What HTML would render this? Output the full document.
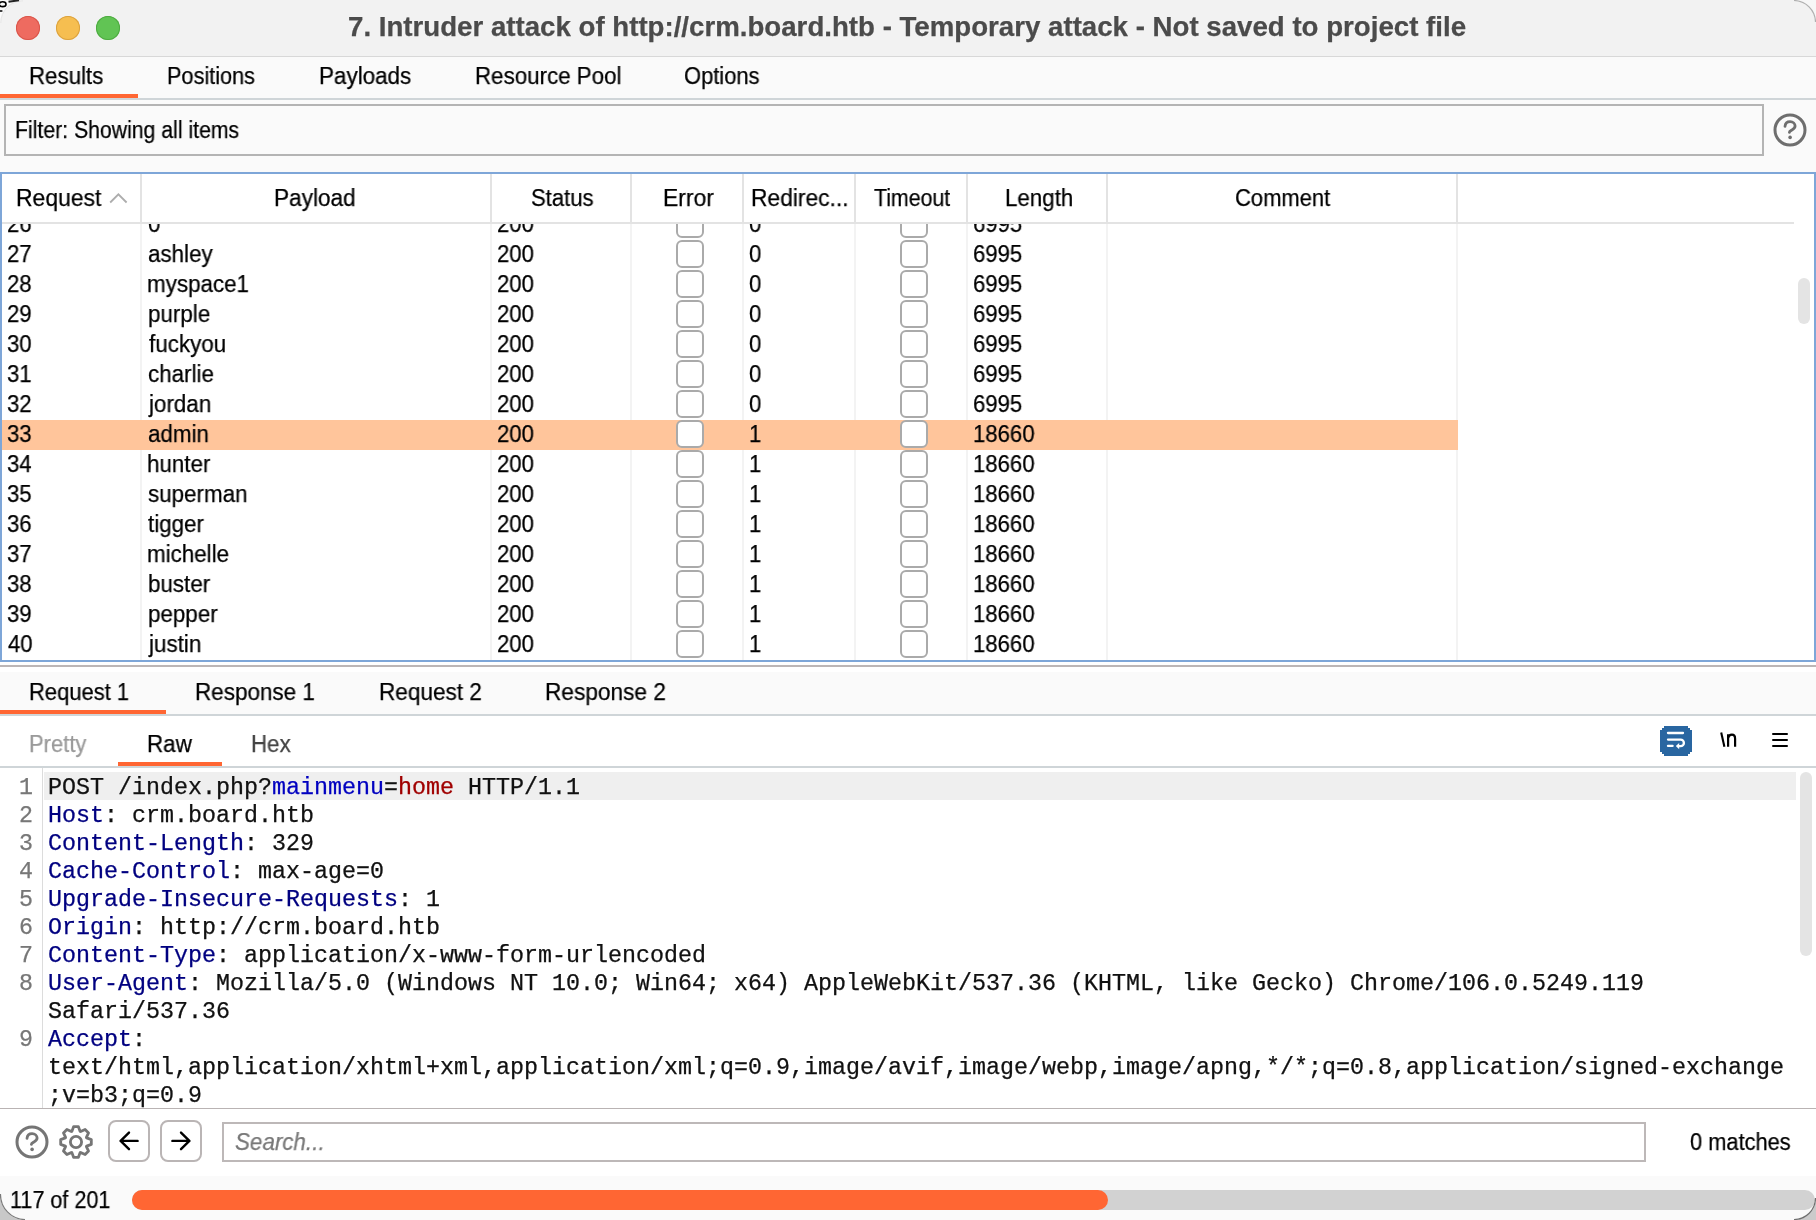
<!DOCTYPE html>
<html><head><meta charset="utf-8"><style>
html,body{margin:0;padding:0;width:1816px;height:1220px;overflow:hidden;background:#fafafa;}
.a{position:absolute;}
.t{white-space:pre;transform-origin:0 0;will-change:transform;-webkit-text-stroke:0.25px currentColor;}
</style></head><body>
<div class="a" style="left:0px;top:0px;width:1816px;height:1220px;background:#fafafa;"></div>
<div class="a" style="left:0px;top:0px;width:1816px;height:56px;background:#f2f2f2;"></div>
<div class="a" style="left:0px;top:56px;width:1816px;height:1px;background:#d8d8d8;"></div>
<div class="a" style="left:16px;top:16px;width:24px;height:24px;background:#ee6b60;border-radius:50%;box-shadow:inset 0 0 0 1px #d9564b;"></div>
<div class="a" style="left:56px;top:16px;width:24px;height:24px;background:#f6be50;border-radius:50%;box-shadow:inset 0 0 0 1px #dba23f;"></div>
<div class="a" style="left:96px;top:16px;width:24px;height:24px;background:#61c454;border-radius:50%;box-shadow:inset 0 0 0 1px #4eab41;"></div>
<div class="a t" style="left:347.89px;top:13.23px;font-size:27.6px;line-height:27.6px;color:#4b4b4b;font-family:'Liberation Sans', sans-serif;transform:scaleX(1.0021);font-weight:bold;">7. Intruder attack of http://crm.board.htb - Temporary attack - Not saved to project file</div>
<div class="a" style="left:0px;top:57px;width:1816px;height:41px;background:#fafafa;"></div>
<div class="a" style="left:0px;top:94px;width:138px;height:4px;background:#ff6633;"></div>
<div class="a" style="left:0px;top:98px;width:1816px;height:2px;background:#cfd5d8;"></div>
<div class="a t" style="left:29.22px;top:65.13px;font-size:23.0px;line-height:23.0px;color:#000;font-family:'Liberation Sans', sans-serif;transform:scaleX(0.9684);">Results</div>
<div class="a t" style="left:167.27px;top:65.13px;font-size:23.0px;line-height:23.0px;color:#000;font-family:'Liberation Sans', sans-serif;transform:scaleX(0.9424);">Positions</div>
<div class="a t" style="left:319.21px;top:65.13px;font-size:23.0px;line-height:23.0px;color:#000;font-family:'Liberation Sans', sans-serif;transform:scaleX(0.9753);">Payloads</div>
<div class="a t" style="left:474.91px;top:65.13px;font-size:23.0px;line-height:23.0px;color:#000;font-family:'Liberation Sans', sans-serif;transform:scaleX(0.9705);">Resource Pool</div>
<div class="a t" style="left:683.60px;top:65.13px;font-size:23.0px;line-height:23.0px;color:#000;font-family:'Liberation Sans', sans-serif;transform:scaleX(0.9524);">Options</div>
<div class="a" style="left:4px;top:104px;width:1760px;height:52px;background:#fafafa;box-sizing:border-box;border:2px solid #b4b4b4;"></div>
<div class="a t" style="left:15.10px;top:119.13px;font-size:23.0px;line-height:23.0px;color:#000;font-family:'Liberation Sans', sans-serif;transform:scaleX(0.9229);">Filter: Showing all items</div>
<svg class="a" style="left:1772px;top:112px" width="36" height="36" viewBox="0 0 36 36"><circle cx="18" cy="18" r="15" fill="none" stroke="#6e6e6e" stroke-width="3"/><path d="M13 14.3 C13.3 11.4 15.5 9.7 18.1 9.7 C21 9.7 23.1 11.6 23.1 14.1 C23.1 16.7 20.7 17.5 19.1 18.5 C18.1 19.1 17.5 19.6 17.4 20.4" fill="none" stroke="#6e6e6e" stroke-width="2.8" stroke-linecap="round"/><circle cx="18.1" cy="25.4" r="1.8" fill="#6e6e6e"/></svg>
<div class="a" style="left:0px;top:172px;width:1816px;height:490px;background:#fff;box-sizing:border-box;border:2px solid #7ea6d8;"></div>
<div class="a" style="left:2px;top:222px;width:1792px;height:2px;background:#e3e3e3;"></div>
<div class="a" style="left:140px;top:174px;width:2px;height:48px;background:#e3e3e3;"></div>
<div class="a" style="left:140px;top:224px;width:2px;height:436px;background:#f3f3f3;"></div>
<div class="a" style="left:490px;top:174px;width:2px;height:48px;background:#e3e3e3;"></div>
<div class="a" style="left:490px;top:224px;width:2px;height:436px;background:#f3f3f3;"></div>
<div class="a" style="left:630px;top:174px;width:2px;height:48px;background:#e3e3e3;"></div>
<div class="a" style="left:630px;top:224px;width:2px;height:436px;background:#f3f3f3;"></div>
<div class="a" style="left:742px;top:174px;width:2px;height:48px;background:#e3e3e3;"></div>
<div class="a" style="left:742px;top:224px;width:2px;height:436px;background:#f3f3f3;"></div>
<div class="a" style="left:854px;top:174px;width:2px;height:48px;background:#e3e3e3;"></div>
<div class="a" style="left:854px;top:224px;width:2px;height:436px;background:#f3f3f3;"></div>
<div class="a" style="left:966px;top:174px;width:2px;height:48px;background:#e3e3e3;"></div>
<div class="a" style="left:966px;top:224px;width:2px;height:436px;background:#f3f3f3;"></div>
<div class="a" style="left:1106px;top:174px;width:2px;height:48px;background:#e3e3e3;"></div>
<div class="a" style="left:1106px;top:224px;width:2px;height:436px;background:#f3f3f3;"></div>
<div class="a" style="left:1456px;top:174px;width:2px;height:48px;background:#e3e3e3;"></div>
<div class="a" style="left:1456px;top:224px;width:2px;height:436px;background:#f3f3f3;"></div>
<div class="a t" style="left:15.57px;top:187.13px;font-size:23.0px;line-height:23.0px;color:#000;font-family:'Liberation Sans', sans-serif;transform:scaleX(0.9962);">Request</div>
<svg class="a" style="left:108px;top:191px" width="22" height="16" viewBox="0 0 22 16"><path d="M2.2 11.5 L10.4 3.3 L18.6 11.5" fill="none" stroke="#adadad" stroke-width="1.8"/></svg>
<div class="a t" style="left:274.19px;top:187.13px;font-size:23.0px;line-height:23.0px;color:#000;font-family:'Liberation Sans', sans-serif;transform:scaleX(0.9823);">Payload</div>
<div class="a t" style="left:531.40px;top:187.13px;font-size:23.0px;line-height:23.0px;color:#000;font-family:'Liberation Sans', sans-serif;transform:scaleX(0.9584);">Status</div>
<div class="a t" style="left:662.97px;top:187.13px;font-size:23.0px;line-height:23.0px;color:#000;font-family:'Liberation Sans', sans-serif;transform:scaleX(0.9941);">Error</div>
<div class="a t" style="left:751.18px;top:187.13px;font-size:23.0px;line-height:23.0px;color:#000;font-family:'Liberation Sans', sans-serif;transform:scaleX(0.9912);">Redirec...</div>
<div class="a t" style="left:873.87px;top:187.13px;font-size:23.0px;line-height:23.0px;color:#000;font-family:'Liberation Sans', sans-serif;transform:scaleX(0.9271);">Timeout</div>
<div class="a t" style="left:1004.61px;top:187.13px;font-size:23.0px;line-height:23.0px;color:#000;font-family:'Liberation Sans', sans-serif;transform:scaleX(0.9712);">Length</div>
<div class="a t" style="left:1234.90px;top:187.13px;font-size:23.0px;line-height:23.0px;color:#000;font-family:'Liberation Sans', sans-serif;transform:scaleX(0.9549);">Comment</div>
<div class="a" style="left:2px;top:224px;width:1792px;height:436px;overflow:hidden">
<div class="a t" style="left:5.09px;top:-10.87px;font-size:23.0px;line-height:23.0px;color:#000;font-family:'Liberation Sans', sans-serif;transform:scaleX(0.9630);">26</div>
<div class="a t" style="left:146.00px;top:-10.87px;font-size:23.0px;line-height:23.0px;color:#000;font-family:'Liberation Sans', sans-serif;transform:scaleX(0.9730);">0</div>
<div class="a t" style="left:494.89px;top:-10.87px;font-size:23.0px;line-height:23.0px;color:#000;font-family:'Liberation Sans', sans-serif;transform:scaleX(0.9630);">200</div>
<div class="a" style="left:674px;top:-14px;width:28px;height:28px;background:#fff;box-sizing:border-box;border:2px solid #aaaaaa;border-radius:6px;"></div>
<div class="a t" style="left:747.41px;top:-10.87px;font-size:23.0px;line-height:23.0px;color:#000;font-family:'Liberation Sans', sans-serif;transform:scaleX(0.9630);">0</div>
<div class="a" style="left:898px;top:-14px;width:28px;height:28px;background:#fff;box-sizing:border-box;border:2px solid #aaaaaa;border-radius:6px;"></div>
<div class="a t" style="left:971.39px;top:-10.87px;font-size:23.0px;line-height:23.0px;color:#000;font-family:'Liberation Sans', sans-serif;transform:scaleX(0.9630);">6995</div>
<div class="a t" style="left:5.09px;top:19.13px;font-size:23.0px;line-height:23.0px;color:#000;font-family:'Liberation Sans', sans-serif;transform:scaleX(0.9630);">27</div>
<div class="a t" style="left:146.00px;top:19.13px;font-size:23.0px;line-height:23.0px;color:#000;font-family:'Liberation Sans', sans-serif;transform:scaleX(0.9730);">ashley</div>
<div class="a t" style="left:494.89px;top:19.13px;font-size:23.0px;line-height:23.0px;color:#000;font-family:'Liberation Sans', sans-serif;transform:scaleX(0.9630);">200</div>
<div class="a" style="left:674px;top:16px;width:28px;height:28px;background:#fff;box-sizing:border-box;border:2px solid #aaaaaa;border-radius:6px;"></div>
<div class="a t" style="left:747.41px;top:19.13px;font-size:23.0px;line-height:23.0px;color:#000;font-family:'Liberation Sans', sans-serif;transform:scaleX(0.9630);">0</div>
<div class="a" style="left:898px;top:16px;width:28px;height:28px;background:#fff;box-sizing:border-box;border:2px solid #aaaaaa;border-radius:6px;"></div>
<div class="a t" style="left:971.39px;top:19.13px;font-size:23.0px;line-height:23.0px;color:#000;font-family:'Liberation Sans', sans-serif;transform:scaleX(0.9630);">6995</div>
<div class="a t" style="left:5.09px;top:49.13px;font-size:23.0px;line-height:23.0px;color:#000;font-family:'Liberation Sans', sans-serif;transform:scaleX(0.9630);">28</div>
<div class="a t" style="left:145.33px;top:49.13px;font-size:23.0px;line-height:23.0px;color:#000;font-family:'Liberation Sans', sans-serif;transform:scaleX(0.9730);">myspace1</div>
<div class="a t" style="left:494.89px;top:49.13px;font-size:23.0px;line-height:23.0px;color:#000;font-family:'Liberation Sans', sans-serif;transform:scaleX(0.9630);">200</div>
<div class="a" style="left:674px;top:46px;width:28px;height:28px;background:#fff;box-sizing:border-box;border:2px solid #aaaaaa;border-radius:6px;"></div>
<div class="a t" style="left:747.41px;top:49.13px;font-size:23.0px;line-height:23.0px;color:#000;font-family:'Liberation Sans', sans-serif;transform:scaleX(0.9630);">0</div>
<div class="a" style="left:898px;top:46px;width:28px;height:28px;background:#fff;box-sizing:border-box;border:2px solid #aaaaaa;border-radius:6px;"></div>
<div class="a t" style="left:971.39px;top:49.13px;font-size:23.0px;line-height:23.0px;color:#000;font-family:'Liberation Sans', sans-serif;transform:scaleX(0.9630);">6995</div>
<div class="a t" style="left:5.09px;top:79.13px;font-size:23.0px;line-height:23.0px;color:#000;font-family:'Liberation Sans', sans-serif;transform:scaleX(0.9630);">29</div>
<div class="a t" style="left:145.56px;top:79.13px;font-size:23.0px;line-height:23.0px;color:#000;font-family:'Liberation Sans', sans-serif;transform:scaleX(0.9730);">purple</div>
<div class="a t" style="left:494.89px;top:79.13px;font-size:23.0px;line-height:23.0px;color:#000;font-family:'Liberation Sans', sans-serif;transform:scaleX(0.9630);">200</div>
<div class="a" style="left:674px;top:76px;width:28px;height:28px;background:#fff;box-sizing:border-box;border:2px solid #aaaaaa;border-radius:6px;"></div>
<div class="a t" style="left:747.41px;top:79.13px;font-size:23.0px;line-height:23.0px;color:#000;font-family:'Liberation Sans', sans-serif;transform:scaleX(0.9630);">0</div>
<div class="a" style="left:898px;top:76px;width:28px;height:28px;background:#fff;box-sizing:border-box;border:2px solid #aaaaaa;border-radius:6px;"></div>
<div class="a t" style="left:971.39px;top:79.13px;font-size:23.0px;line-height:23.0px;color:#000;font-family:'Liberation Sans', sans-serif;transform:scaleX(0.9630);">6995</div>
<div class="a t" style="left:5.31px;top:109.13px;font-size:23.0px;line-height:23.0px;color:#000;font-family:'Liberation Sans', sans-serif;transform:scaleX(0.9630);">30</div>
<div class="a t" style="left:146.68px;top:109.13px;font-size:23.0px;line-height:23.0px;color:#000;font-family:'Liberation Sans', sans-serif;transform:scaleX(0.9730);">fuckyou</div>
<div class="a t" style="left:494.89px;top:109.13px;font-size:23.0px;line-height:23.0px;color:#000;font-family:'Liberation Sans', sans-serif;transform:scaleX(0.9630);">200</div>
<div class="a" style="left:674px;top:106px;width:28px;height:28px;background:#fff;box-sizing:border-box;border:2px solid #aaaaaa;border-radius:6px;"></div>
<div class="a t" style="left:747.41px;top:109.13px;font-size:23.0px;line-height:23.0px;color:#000;font-family:'Liberation Sans', sans-serif;transform:scaleX(0.9630);">0</div>
<div class="a" style="left:898px;top:106px;width:28px;height:28px;background:#fff;box-sizing:border-box;border:2px solid #aaaaaa;border-radius:6px;"></div>
<div class="a t" style="left:971.39px;top:109.13px;font-size:23.0px;line-height:23.0px;color:#000;font-family:'Liberation Sans', sans-serif;transform:scaleX(0.9630);">6995</div>
<div class="a t" style="left:5.31px;top:139.13px;font-size:23.0px;line-height:23.0px;color:#000;font-family:'Liberation Sans', sans-serif;transform:scaleX(0.9630);">31</div>
<div class="a t" style="left:146.00px;top:139.13px;font-size:23.0px;line-height:23.0px;color:#000;font-family:'Liberation Sans', sans-serif;transform:scaleX(0.9730);">charlie</div>
<div class="a t" style="left:494.89px;top:139.13px;font-size:23.0px;line-height:23.0px;color:#000;font-family:'Liberation Sans', sans-serif;transform:scaleX(0.9630);">200</div>
<div class="a" style="left:674px;top:136px;width:28px;height:28px;background:#fff;box-sizing:border-box;border:2px solid #aaaaaa;border-radius:6px;"></div>
<div class="a t" style="left:747.41px;top:139.13px;font-size:23.0px;line-height:23.0px;color:#000;font-family:'Liberation Sans', sans-serif;transform:scaleX(0.9630);">0</div>
<div class="a" style="left:898px;top:136px;width:28px;height:28px;background:#fff;box-sizing:border-box;border:2px solid #aaaaaa;border-radius:6px;"></div>
<div class="a t" style="left:971.39px;top:139.13px;font-size:23.0px;line-height:23.0px;color:#000;font-family:'Liberation Sans', sans-serif;transform:scaleX(0.9630);">6995</div>
<div class="a t" style="left:5.31px;top:169.13px;font-size:23.0px;line-height:23.0px;color:#000;font-family:'Liberation Sans', sans-serif;transform:scaleX(0.9630);">32</div>
<div class="a t" style="left:147.35px;top:169.13px;font-size:23.0px;line-height:23.0px;color:#000;font-family:'Liberation Sans', sans-serif;transform:scaleX(0.9730);">jordan</div>
<div class="a t" style="left:494.89px;top:169.13px;font-size:23.0px;line-height:23.0px;color:#000;font-family:'Liberation Sans', sans-serif;transform:scaleX(0.9630);">200</div>
<div class="a" style="left:674px;top:166px;width:28px;height:28px;background:#fff;box-sizing:border-box;border:2px solid #aaaaaa;border-radius:6px;"></div>
<div class="a t" style="left:747.41px;top:169.13px;font-size:23.0px;line-height:23.0px;color:#000;font-family:'Liberation Sans', sans-serif;transform:scaleX(0.9630);">0</div>
<div class="a" style="left:898px;top:166px;width:28px;height:28px;background:#fff;box-sizing:border-box;border:2px solid #aaaaaa;border-radius:6px;"></div>
<div class="a t" style="left:971.39px;top:169.13px;font-size:23.0px;line-height:23.0px;color:#000;font-family:'Liberation Sans', sans-serif;transform:scaleX(0.9630);">6995</div>
<div class="a" style="left:0px;top:196px;width:1456px;height:30px;background:#ffc59b;"></div>
<div class="a t" style="left:5.31px;top:199.13px;font-size:23.0px;line-height:23.0px;color:#000;font-family:'Liberation Sans', sans-serif;transform:scaleX(0.9630);">33</div>
<div class="a t" style="left:146.00px;top:199.13px;font-size:23.0px;line-height:23.0px;color:#000;font-family:'Liberation Sans', sans-serif;transform:scaleX(0.9730);">admin</div>
<div class="a t" style="left:494.89px;top:199.13px;font-size:23.0px;line-height:23.0px;color:#000;font-family:'Liberation Sans', sans-serif;transform:scaleX(0.9630);">200</div>
<div class="a" style="left:674px;top:196px;width:28px;height:28px;background:#fff;box-sizing:border-box;border:2px solid #aaaaaa;border-radius:6px;"></div>
<div class="a t" style="left:746.53px;top:199.13px;font-size:23.0px;line-height:23.0px;color:#000;font-family:'Liberation Sans', sans-serif;transform:scaleX(0.9630);">1</div>
<div class="a" style="left:898px;top:196px;width:28px;height:28px;background:#fff;box-sizing:border-box;border:2px solid #aaaaaa;border-radius:6px;"></div>
<div class="a t" style="left:970.73px;top:199.13px;font-size:23.0px;line-height:23.0px;color:#000;font-family:'Liberation Sans', sans-serif;transform:scaleX(0.9630);">18660</div>
<div class="a t" style="left:5.31px;top:229.13px;font-size:23.0px;line-height:23.0px;color:#000;font-family:'Liberation Sans', sans-serif;transform:scaleX(0.9630);">34</div>
<div class="a t" style="left:145.33px;top:229.13px;font-size:23.0px;line-height:23.0px;color:#000;font-family:'Liberation Sans', sans-serif;transform:scaleX(0.9730);">hunter</div>
<div class="a t" style="left:494.89px;top:229.13px;font-size:23.0px;line-height:23.0px;color:#000;font-family:'Liberation Sans', sans-serif;transform:scaleX(0.9630);">200</div>
<div class="a" style="left:674px;top:226px;width:28px;height:28px;background:#fff;box-sizing:border-box;border:2px solid #aaaaaa;border-radius:6px;"></div>
<div class="a t" style="left:746.53px;top:229.13px;font-size:23.0px;line-height:23.0px;color:#000;font-family:'Liberation Sans', sans-serif;transform:scaleX(0.9630);">1</div>
<div class="a" style="left:898px;top:226px;width:28px;height:28px;background:#fff;box-sizing:border-box;border:2px solid #aaaaaa;border-radius:6px;"></div>
<div class="a t" style="left:970.73px;top:229.13px;font-size:23.0px;line-height:23.0px;color:#000;font-family:'Liberation Sans', sans-serif;transform:scaleX(0.9630);">18660</div>
<div class="a t" style="left:5.31px;top:259.13px;font-size:23.0px;line-height:23.0px;color:#000;font-family:'Liberation Sans', sans-serif;transform:scaleX(0.9630);">35</div>
<div class="a t" style="left:146.23px;top:259.13px;font-size:23.0px;line-height:23.0px;color:#000;font-family:'Liberation Sans', sans-serif;transform:scaleX(0.9730);">superman</div>
<div class="a t" style="left:494.89px;top:259.13px;font-size:23.0px;line-height:23.0px;color:#000;font-family:'Liberation Sans', sans-serif;transform:scaleX(0.9630);">200</div>
<div class="a" style="left:674px;top:256px;width:28px;height:28px;background:#fff;box-sizing:border-box;border:2px solid #aaaaaa;border-radius:6px;"></div>
<div class="a t" style="left:746.53px;top:259.13px;font-size:23.0px;line-height:23.0px;color:#000;font-family:'Liberation Sans', sans-serif;transform:scaleX(0.9630);">1</div>
<div class="a" style="left:898px;top:256px;width:28px;height:28px;background:#fff;box-sizing:border-box;border:2px solid #aaaaaa;border-radius:6px;"></div>
<div class="a t" style="left:970.73px;top:259.13px;font-size:23.0px;line-height:23.0px;color:#000;font-family:'Liberation Sans', sans-serif;transform:scaleX(0.9630);">18660</div>
<div class="a t" style="left:5.31px;top:289.13px;font-size:23.0px;line-height:23.0px;color:#000;font-family:'Liberation Sans', sans-serif;transform:scaleX(0.9630);">36</div>
<div class="a t" style="left:146.45px;top:289.13px;font-size:23.0px;line-height:23.0px;color:#000;font-family:'Liberation Sans', sans-serif;transform:scaleX(0.9730);">tigger</div>
<div class="a t" style="left:494.89px;top:289.13px;font-size:23.0px;line-height:23.0px;color:#000;font-family:'Liberation Sans', sans-serif;transform:scaleX(0.9630);">200</div>
<div class="a" style="left:674px;top:286px;width:28px;height:28px;background:#fff;box-sizing:border-box;border:2px solid #aaaaaa;border-radius:6px;"></div>
<div class="a t" style="left:746.53px;top:289.13px;font-size:23.0px;line-height:23.0px;color:#000;font-family:'Liberation Sans', sans-serif;transform:scaleX(0.9630);">1</div>
<div class="a" style="left:898px;top:286px;width:28px;height:28px;background:#fff;box-sizing:border-box;border:2px solid #aaaaaa;border-radius:6px;"></div>
<div class="a t" style="left:970.73px;top:289.13px;font-size:23.0px;line-height:23.0px;color:#000;font-family:'Liberation Sans', sans-serif;transform:scaleX(0.9630);">18660</div>
<div class="a t" style="left:5.31px;top:319.13px;font-size:23.0px;line-height:23.0px;color:#000;font-family:'Liberation Sans', sans-serif;transform:scaleX(0.9630);">37</div>
<div class="a t" style="left:145.33px;top:319.13px;font-size:23.0px;line-height:23.0px;color:#000;font-family:'Liberation Sans', sans-serif;transform:scaleX(0.9730);">michelle</div>
<div class="a t" style="left:494.89px;top:319.13px;font-size:23.0px;line-height:23.0px;color:#000;font-family:'Liberation Sans', sans-serif;transform:scaleX(0.9630);">200</div>
<div class="a" style="left:674px;top:316px;width:28px;height:28px;background:#fff;box-sizing:border-box;border:2px solid #aaaaaa;border-radius:6px;"></div>
<div class="a t" style="left:746.53px;top:319.13px;font-size:23.0px;line-height:23.0px;color:#000;font-family:'Liberation Sans', sans-serif;transform:scaleX(0.9630);">1</div>
<div class="a" style="left:898px;top:316px;width:28px;height:28px;background:#fff;box-sizing:border-box;border:2px solid #aaaaaa;border-radius:6px;"></div>
<div class="a t" style="left:970.73px;top:319.13px;font-size:23.0px;line-height:23.0px;color:#000;font-family:'Liberation Sans', sans-serif;transform:scaleX(0.9630);">18660</div>
<div class="a t" style="left:5.31px;top:349.13px;font-size:23.0px;line-height:23.0px;color:#000;font-family:'Liberation Sans', sans-serif;transform:scaleX(0.9630);">38</div>
<div class="a t" style="left:145.56px;top:349.13px;font-size:23.0px;line-height:23.0px;color:#000;font-family:'Liberation Sans', sans-serif;transform:scaleX(0.9730);">buster</div>
<div class="a t" style="left:494.89px;top:349.13px;font-size:23.0px;line-height:23.0px;color:#000;font-family:'Liberation Sans', sans-serif;transform:scaleX(0.9630);">200</div>
<div class="a" style="left:674px;top:346px;width:28px;height:28px;background:#fff;box-sizing:border-box;border:2px solid #aaaaaa;border-radius:6px;"></div>
<div class="a t" style="left:746.53px;top:349.13px;font-size:23.0px;line-height:23.0px;color:#000;font-family:'Liberation Sans', sans-serif;transform:scaleX(0.9630);">1</div>
<div class="a" style="left:898px;top:346px;width:28px;height:28px;background:#fff;box-sizing:border-box;border:2px solid #aaaaaa;border-radius:6px;"></div>
<div class="a t" style="left:970.73px;top:349.13px;font-size:23.0px;line-height:23.0px;color:#000;font-family:'Liberation Sans', sans-serif;transform:scaleX(0.9630);">18660</div>
<div class="a t" style="left:5.31px;top:379.13px;font-size:23.0px;line-height:23.0px;color:#000;font-family:'Liberation Sans', sans-serif;transform:scaleX(0.9630);">39</div>
<div class="a t" style="left:145.56px;top:379.13px;font-size:23.0px;line-height:23.0px;color:#000;font-family:'Liberation Sans', sans-serif;transform:scaleX(0.9730);">pepper</div>
<div class="a t" style="left:494.89px;top:379.13px;font-size:23.0px;line-height:23.0px;color:#000;font-family:'Liberation Sans', sans-serif;transform:scaleX(0.9630);">200</div>
<div class="a" style="left:674px;top:376px;width:28px;height:28px;background:#fff;box-sizing:border-box;border:2px solid #aaaaaa;border-radius:6px;"></div>
<div class="a t" style="left:746.53px;top:379.13px;font-size:23.0px;line-height:23.0px;color:#000;font-family:'Liberation Sans', sans-serif;transform:scaleX(0.9630);">1</div>
<div class="a" style="left:898px;top:376px;width:28px;height:28px;background:#fff;box-sizing:border-box;border:2px solid #aaaaaa;border-radius:6px;"></div>
<div class="a t" style="left:970.73px;top:379.13px;font-size:23.0px;line-height:23.0px;color:#000;font-family:'Liberation Sans', sans-serif;transform:scaleX(0.9630);">18660</div>
<div class="a t" style="left:5.76px;top:409.13px;font-size:23.0px;line-height:23.0px;color:#000;font-family:'Liberation Sans', sans-serif;transform:scaleX(0.9630);">40</div>
<div class="a t" style="left:147.35px;top:409.13px;font-size:23.0px;line-height:23.0px;color:#000;font-family:'Liberation Sans', sans-serif;transform:scaleX(0.9730);">justin</div>
<div class="a t" style="left:494.89px;top:409.13px;font-size:23.0px;line-height:23.0px;color:#000;font-family:'Liberation Sans', sans-serif;transform:scaleX(0.9630);">200</div>
<div class="a" style="left:674px;top:406px;width:28px;height:28px;background:#fff;box-sizing:border-box;border:2px solid #aaaaaa;border-radius:6px;"></div>
<div class="a t" style="left:746.53px;top:409.13px;font-size:23.0px;line-height:23.0px;color:#000;font-family:'Liberation Sans', sans-serif;transform:scaleX(0.9630);">1</div>
<div class="a" style="left:898px;top:406px;width:28px;height:28px;background:#fff;box-sizing:border-box;border:2px solid #aaaaaa;border-radius:6px;"></div>
<div class="a t" style="left:970.73px;top:409.13px;font-size:23.0px;line-height:23.0px;color:#000;font-family:'Liberation Sans', sans-serif;transform:scaleX(0.9630);">18660</div>
</div>
<div class="a" style="left:1798px;top:278px;width:12px;height:46px;background:#e4e4e4;border-radius:6px;"></div>
<div class="a" style="left:0px;top:662px;width:1816px;height:3px;background:#fff;"></div>
<div class="a" style="left:0px;top:665px;width:1816px;height:2px;background:#bcb6b6;"></div>
<div class="a" style="left:0px;top:667px;width:1816px;height:5px;background:#fff;"></div>
<div class="a" style="left:0px;top:672px;width:1816px;height:42px;background:#fafafa;"></div>
<div class="a" style="left:0px;top:710px;width:166px;height:4px;background:#ff6633;"></div>
<div class="a" style="left:0px;top:714px;width:1816px;height:2px;background:#cfd5d8;"></div>
<div class="a t" style="left:29.34px;top:681.13px;font-size:23.0px;line-height:23.0px;color:#000;font-family:'Liberation Sans', sans-serif;transform:scaleX(0.9550);">Request 1</div>
<div class="a t" style="left:195.20px;top:681.13px;font-size:23.0px;line-height:23.0px;color:#000;font-family:'Liberation Sans', sans-serif;transform:scaleX(0.9764);">Response 1</div>
<div class="a t" style="left:379.19px;top:681.13px;font-size:23.0px;line-height:23.0px;color:#000;font-family:'Liberation Sans', sans-serif;transform:scaleX(0.9815);">Request 2</div>
<div class="a t" style="left:545.19px;top:681.13px;font-size:23.0px;line-height:23.0px;color:#000;font-family:'Liberation Sans', sans-serif;transform:scaleX(0.9847);">Response 2</div>
<div class="a" style="left:0px;top:716px;width:1816px;height:50px;background:#fff;"></div>
<div class="a" style="left:118px;top:762px;width:104px;height:4px;background:#ff6633;"></div>
<div class="a" style="left:0px;top:766px;width:1816px;height:2px;background:#cfd5d8;"></div>
<div class="a t" style="left:29.24px;top:733.13px;font-size:23.0px;line-height:23.0px;color:#9a9a9a;font-family:'Liberation Sans', sans-serif;transform:scaleX(0.9555);">Pretty</div>
<div class="a t" style="left:147.21px;top:733.13px;font-size:23.0px;line-height:23.0px;color:#000;font-family:'Liberation Sans', sans-serif;transform:scaleX(0.9737);">Raw</div>
<div class="a t" style="left:251.22px;top:733.13px;font-size:23.0px;line-height:23.0px;color:#454545;font-family:'Liberation Sans', sans-serif;transform:scaleX(0.9699);">Hex</div>
<svg class="a" style="left:1660px;top:726px" width="32" height="30" viewBox="0 0 32 30"><path d="M4 0 H28 V2 H30 V4 H32 V26 H30 V28 H28 V30 H4 V28 H2 V26 H0 V4 H2 V2 H4 Z" fill="#2966a1"/><path d="M8 7 H23" stroke="#fff" stroke-width="2.3" stroke-linecap="round"/><path d="M8 13.6 H20.6 A3.3 3.3 0 0 1 20.6 20.2 H18.6" fill="none" stroke="#fff" stroke-width="2.3" stroke-linecap="round"/><path d="M15.8 20.1 L19.2 16.9 L19.2 23.3 Z" fill="#fff"/><path d="M8 19.9 H12.6" stroke="#fff" stroke-width="2.3" stroke-linecap="round"/></svg>
<svg class="a" style="left:1716px;top:728px" width="26" height="22" viewBox="0 0 26 22"><path d="M5.2 4.4 L8.4 18.7" stroke="#000" stroke-width="2.1"/><path d="M12.1 18.7 V6.2 M12.1 10.4 C12.5 7.7 14 6.7 15.9 6.7 C18 6.7 19.1 8.1 19.1 10.7 V18.7" fill="none" stroke="#000" stroke-width="2.2"/></svg>
<div class="a" style="left:1772px;top:733px;width:16px;height:2.1px;background:#000;border-radius:1px;"></div>
<div class="a" style="left:1772px;top:739px;width:16px;height:2.1px;background:#000;border-radius:1px;"></div>
<div class="a" style="left:1772px;top:745px;width:16px;height:2.1px;background:#000;border-radius:1px;"></div>
<div class="a" style="left:0px;top:768px;width:1816px;height:340px;background:#fff;"></div>
<div class="a" style="left:42px;top:768px;width:1px;height:340px;background:#dcdcdc;"></div>
<div class="a" style="left:44px;top:772px;width:1752px;height:28px;background:#efefef;"></div>
<div class="a" style="left:1800px;top:772px;width:12px;height:184px;background:#e4e4e4;border-radius:6px;"></div>
<div class="a" style="left:0;top:768px;width:1796px;height:340px;overflow:hidden">
<div class="a t" style="left:19.00px;top:8.93px;font-size:23.33px;line-height:23.33px;color:#777;font-family:'Liberation Mono', monospace;">1</div>
<div class="a t" style="left:48.00px;top:8.93px;font-size:23.33px;line-height:23.33px;color:#111;font-family:'Liberation Mono', monospace;">POST /index.php?</div>
<div class="a t" style="left:272.00px;top:8.93px;font-size:23.33px;line-height:23.33px;color:#0000c0;font-family:'Liberation Mono', monospace;">mainmenu</div>
<div class="a t" style="left:384.00px;top:8.93px;font-size:23.33px;line-height:23.33px;color:#111;font-family:'Liberation Mono', monospace;">=</div>
<div class="a t" style="left:398.00px;top:8.93px;font-size:23.33px;line-height:23.33px;color:#a00000;font-family:'Liberation Mono', monospace;">home</div>
<div class="a t" style="left:454.00px;top:8.93px;font-size:23.33px;line-height:23.33px;color:#111;font-family:'Liberation Mono', monospace;"> HTTP/1.1</div>
<div class="a t" style="left:19.00px;top:36.93px;font-size:23.33px;line-height:23.33px;color:#777;font-family:'Liberation Mono', monospace;">2</div>
<div class="a t" style="left:48.00px;top:36.93px;font-size:23.33px;line-height:23.33px;color:#000080;font-family:'Liberation Mono', monospace;">Host</div>
<div class="a t" style="left:104.00px;top:36.93px;font-size:23.33px;line-height:23.33px;color:#111;font-family:'Liberation Mono', monospace;">: crm.board.htb</div>
<div class="a t" style="left:19.00px;top:64.93px;font-size:23.33px;line-height:23.33px;color:#777;font-family:'Liberation Mono', monospace;">3</div>
<div class="a t" style="left:48.00px;top:64.93px;font-size:23.33px;line-height:23.33px;color:#000080;font-family:'Liberation Mono', monospace;">Content-Length</div>
<div class="a t" style="left:244.00px;top:64.93px;font-size:23.33px;line-height:23.33px;color:#111;font-family:'Liberation Mono', monospace;">: 329</div>
<div class="a t" style="left:19.00px;top:92.93px;font-size:23.33px;line-height:23.33px;color:#777;font-family:'Liberation Mono', monospace;">4</div>
<div class="a t" style="left:48.00px;top:92.93px;font-size:23.33px;line-height:23.33px;color:#000080;font-family:'Liberation Mono', monospace;">Cache-Control</div>
<div class="a t" style="left:230.00px;top:92.93px;font-size:23.33px;line-height:23.33px;color:#111;font-family:'Liberation Mono', monospace;">: max-age=0</div>
<div class="a t" style="left:19.00px;top:120.93px;font-size:23.33px;line-height:23.33px;color:#777;font-family:'Liberation Mono', monospace;">5</div>
<div class="a t" style="left:48.00px;top:120.93px;font-size:23.33px;line-height:23.33px;color:#000080;font-family:'Liberation Mono', monospace;">Upgrade-Insecure-Requests</div>
<div class="a t" style="left:398.00px;top:120.93px;font-size:23.33px;line-height:23.33px;color:#111;font-family:'Liberation Mono', monospace;">: 1</div>
<div class="a t" style="left:19.00px;top:148.93px;font-size:23.33px;line-height:23.33px;color:#777;font-family:'Liberation Mono', monospace;">6</div>
<div class="a t" style="left:48.00px;top:148.93px;font-size:23.33px;line-height:23.33px;color:#000080;font-family:'Liberation Mono', monospace;">Origin</div>
<div class="a t" style="left:132.00px;top:148.93px;font-size:23.33px;line-height:23.33px;color:#111;font-family:'Liberation Mono', monospace;">: http://crm.board.htb</div>
<div class="a t" style="left:19.00px;top:176.93px;font-size:23.33px;line-height:23.33px;color:#777;font-family:'Liberation Mono', monospace;">7</div>
<div class="a t" style="left:48.00px;top:176.93px;font-size:23.33px;line-height:23.33px;color:#000080;font-family:'Liberation Mono', monospace;">Content-Type</div>
<div class="a t" style="left:216.00px;top:176.93px;font-size:23.33px;line-height:23.33px;color:#111;font-family:'Liberation Mono', monospace;">: application/x-www-form-urlencoded</div>
<div class="a t" style="left:19.00px;top:204.93px;font-size:23.33px;line-height:23.33px;color:#777;font-family:'Liberation Mono', monospace;">8</div>
<div class="a t" style="left:48.00px;top:204.93px;font-size:23.33px;line-height:23.33px;color:#000080;font-family:'Liberation Mono', monospace;">User-Agent</div>
<div class="a t" style="left:188.00px;top:204.93px;font-size:23.33px;line-height:23.33px;color:#111;font-family:'Liberation Mono', monospace;">: Mozilla/5.0 (Windows NT 10.0; Win64; x64) AppleWebKit/537.36 (KHTML, like Gecko) Chrome/106.0.5249.119</div>
<div class="a t" style="left:48.00px;top:232.93px;font-size:23.33px;line-height:23.33px;color:#111;font-family:'Liberation Mono', monospace;">Safari/537.36</div>
<div class="a t" style="left:19.00px;top:260.93px;font-size:23.33px;line-height:23.33px;color:#777;font-family:'Liberation Mono', monospace;">9</div>
<div class="a t" style="left:48.00px;top:260.93px;font-size:23.33px;line-height:23.33px;color:#000080;font-family:'Liberation Mono', monospace;">Accept</div>
<div class="a t" style="left:132.00px;top:260.93px;font-size:23.33px;line-height:23.33px;color:#111;font-family:'Liberation Mono', monospace;">:</div>
<div class="a t" style="left:48.00px;top:288.93px;font-size:23.33px;line-height:23.33px;color:#111;font-family:'Liberation Mono', monospace;">text/html,application/xhtml+xml,application/xml;q=0.9,image/avif,image/webp,image/apng,*/*;q=0.8,application/signed-exchange</div>
<div class="a t" style="left:48.00px;top:316.93px;font-size:23.33px;line-height:23.33px;color:#111;font-family:'Liberation Mono', monospace;">;v=b3;q=0.9</div>
</div>
<div class="a" style="left:0px;top:1108px;width:1816px;height:1px;background:#b9b3b3;"></div>
<div class="a" style="left:0px;top:1109px;width:1816px;height:67px;background:#fff;"></div>
<svg class="a" style="left:14px;top:1124px" width="36" height="36" viewBox="0 0 36 36"><circle cx="18" cy="18" r="15" fill="none" stroke="#757575" stroke-width="3"/><path d="M13 14.3 C13.3 11.4 15.5 9.7 18.1 9.7 C21 9.7 23.1 11.6 23.1 14.1 C23.1 16.7 20.7 17.5 19.1 18.5 C18.1 19.1 17.5 19.6 17.4 20.4" fill="none" stroke="#757575" stroke-width="2.8" stroke-linecap="round"/><circle cx="18.1" cy="25.4" r="1.8" fill="#757575"/></svg>
<svg class="a" style="left:58px;top:1124px" width="36" height="36" viewBox="0 0 36 36"><path d="M13.91 7.36 L15.58 2.69 L20.42 2.69 L22.09 7.36 A11.40 11.40 0 0 1 22.64 7.59 L27.11 5.46 L30.54 8.89 L28.41 13.36 A11.40 11.40 0 0 1 28.64 13.91 L33.31 15.58 L33.31 20.42 L28.64 22.09 A11.40 11.40 0 0 1 28.41 22.64 L30.54 27.11 L27.11 30.54 L22.64 28.41 A11.40 11.40 0 0 1 22.09 28.64 L20.42 33.31 L15.58 33.31 L13.91 28.64 A11.40 11.40 0 0 1 13.36 28.41 L8.89 30.54 L5.46 27.11 L7.59 22.64 A11.40 11.40 0 0 1 7.36 22.09 L2.69 20.42 L2.69 15.58 L7.36 13.91 A11.40 11.40 0 0 1 7.59 13.36 L5.46 8.89 L8.89 5.46 L13.36 7.59 A11.40 11.40 0 0 1 13.91 7.36 Z" fill="none" stroke="#757575" stroke-width="2.8" stroke-linejoin="round"/><circle cx="18" cy="18" r="5.6" fill="none" stroke="#757575" stroke-width="2.8"/></svg>
<div class="a" style="left:108px;top:1120px;width:42px;height:42px;background:#fff;box-sizing:border-box;border:2px solid #bab5b5;border-radius:8px;"></div>
<div class="a" style="left:160px;top:1120px;width:42px;height:42px;background:#fff;box-sizing:border-box;border:2px solid #bab5b5;border-radius:8px;"></div>
<svg class="a" style="left:108px;top:1120px" width="42" height="42" viewBox="0 0 42 42"><path d="M29.6 20.9 H12.6 M21 12.6 L12.6 20.9 L21 29.2" fill="none" stroke="#000" stroke-width="2.4" stroke-linecap="round" stroke-linejoin="round"/></svg>
<svg class="a" style="left:160px;top:1120px" width="42" height="42" viewBox="0 0 42 42"><path d="M12.4 20.9 H29.4 M21 12.6 L29.4 20.9 L21 29.2" fill="none" stroke="#000" stroke-width="2.4" stroke-linecap="round" stroke-linejoin="round"/></svg>
<div class="a" style="left:222px;top:1122px;width:1424px;height:40px;background:#fff;box-sizing:border-box;border:2px solid #bdb8b8;"></div>
<div class="a t" style="left:235.33px;top:1130.73px;font-size:23.0px;line-height:23.0px;color:#787878;font-family:'Liberation Sans', sans-serif;transform:scaleX(0.9737);font-style:italic;">Search...</div>
<div class="a t" style="left:1689.73px;top:1130.53px;font-size:23.0px;line-height:23.0px;color:#000;font-family:'Liberation Sans', sans-serif;transform:scaleX(0.9492);">0 matches</div>
<div class="a" style="left:0px;top:1176px;width:1816px;height:44px;background:#fafafa;"></div>
<div class="a t" style="left:9.97px;top:1189.13px;font-size:23.0px;line-height:23.0px;color:#000;font-family:'Liberation Sans', sans-serif;transform:scaleX(0.9377);">117 of 201</div>
<div class="a" style="left:132px;top:1190px;width:1683px;height:20px;background:#d2d2d2;border-radius:10px;"></div>
<div class="a" style="left:132px;top:1190px;width:976px;height:20px;background:#ff6633;border-radius:10px;"></div>
<svg class="a" style="left:0;top:0" width="26" height="26" viewBox="0 0 26 26"><path d="M0 0 H23 A23 23 0 0 0 0 23 Z" fill="#fbfbfb"/><path d="M23 0.8 A22.2 22.2 0 0 0 0.8 23" fill="none" stroke="#e6e6e6" stroke-width="1"/><ellipse cx="2.6" cy="4.2" rx="3.4" ry="2.4" fill="none" stroke="#000" stroke-width="1.6"/><rect x="0" y="10.2" width="2.4" height="1.6" fill="#111"/><path d="M8.5 1.8 L19 0.2" stroke="#222" stroke-width="2"/></svg>
<svg class="a" style="left:1792px;top:0" width="24" height="24" viewBox="0 0 24 24"><path d="M2 0 H24 V22 A22 22 0 0 0 2 0 Z" fill="#f7f7f7"/><path d="M2 0.5 A22 22 0 0 1 23.5 22" fill="none" stroke="#b0b0b0" stroke-width="1.2"/></svg>
<svg class="a" style="left:0;top:1194px" width="26" height="26" viewBox="0 0 26 26"><path d="M0 0 A25 25 0 0 0 25 26 H0 Z" fill="#c8c8c8"/><path d="M0.5 0 A25 25 0 0 0 25 25.6" fill="none" stroke="#7a7a7a" stroke-width="1.2"/></svg>
<svg class="a" style="left:1794px;top:1198px" width="22" height="22" viewBox="0 0 22 22"><path d="M22 0 A22 22 0 0 1 0 22 H22 Z" fill="#cbcbcb"/><path d="M21.5 0 A21.5 21.5 0 0 1 0 21.5" fill="none" stroke="#6f6f6f" stroke-width="1.2"/></svg>
</body></html>
